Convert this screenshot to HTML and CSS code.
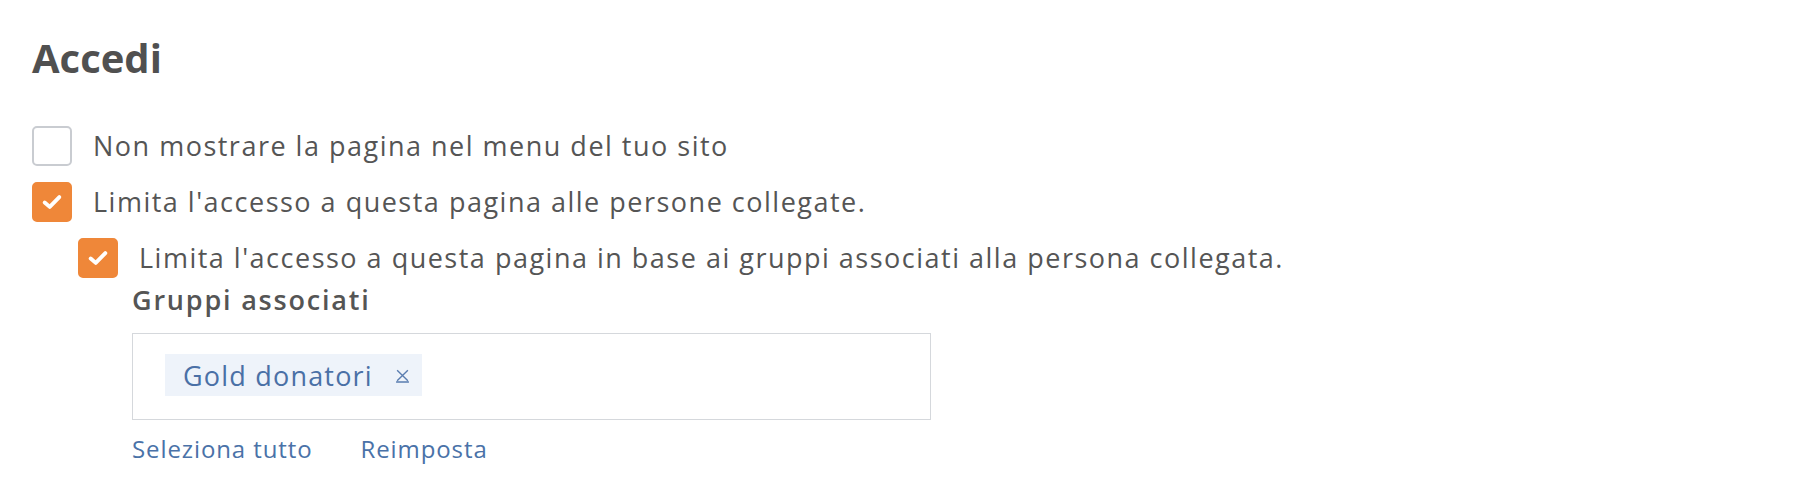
FILE: index.html
```html
<!DOCTYPE html>
<html lang="it">
<head>
    <meta charset="UTF-8">
    <title>Accedi</title>
    <link rel="stylesheet" href="styles.css">
</head>
<body>
    <div class="access-panel">
        <h1>Accedi</h1>
        <div class="option-list">
            <label class="option">
                <span class="check"></span>
                <span class="option-text">Non mostrare la pagina nel menu del tuo sito</span>
            </label>
            <label class="option">
                <span class="check checked">
                    <svg viewBox="0 0 16 16"><path d="M3.5 8.3 L6.6 11 L12.5 5"/></svg>
                </span>
                <span class="option-text">Limita l'accesso a questa pagina alle persone collegate.</span>
            </label>
            <div class="sub-options">
                <label class="option">
                    <span class="check checked">
                        <svg viewBox="0 0 16 16"><path d="M3.5 8.3 L6.6 11 L12.5 5"/></svg>
                    </span>
                    <span class="option-text sub-text">Limita l'accesso a questa pagina in base ai gruppi associati alla persona collegata.</span>
                </label>
                <div class="groups">
                    <div class="groups-label">Gruppi associati</div>
                    <div class="tag-box">
                        <span class="tag">Gold donatori
                            <svg class="tag-remove" viewBox="0 0 14 14"><path d="M2 2 L12 12 M12 2 L2 12 M1 13 H13"/></svg>
                        </span>
                    </div>
                    <div class="tag-actions">
                        <a href="#">Seleziona tutto</a>
                        <a href="#">Reimposta</a>
                    </div>
                </div>
            </div>
        </div>
    </div>
</body>
</html>
```

FILE: styles.css
```css
body {
    margin: 0;
    font-family: 'Open Sans', 'Noto Sans', sans-serif;
    background-color: #ffffff;
    color: #555555;
}
.access-panel {
    padding: 32px 32px;
}
.access-panel h1 {
    margin: 0 0 42px 0;
    font-size: 40px;
    font-weight: 700;
    color: #505050;
    line-height: 52px;
}
.option {
    display: flex;
    align-items: center;
    gap: 21px;
    margin-bottom: 16px;
    cursor: pointer;
}
.check {
    width: 36px;
    height: 36px;
    border: 2px solid #c9ccd1;
    border-radius: 5px;
    background-color: #ffffff;
    display: flex;
    align-items: center;
    justify-content: center;
    flex-shrink: 0;
}
.check.checked {
    background-color: #ef8739;
    border-color: #ef8739;
}
.check svg {
    width: 26px;
    height: 26px;
    fill: none;
    stroke: #ffffff;
    stroke-width: 2.4;
    stroke-linecap: round;
    stroke-linejoin: round;
}
.option-text {
    font-size: 27px;
    line-height: 40px;
    letter-spacing: 1.5px;
}
.sub-options {
    padding-left: 46px;
}
.sub-options .option {
    margin-bottom: 4px;
}
.groups {
    padding-left: 54px;
}
.groups-label {
    font-size: 27px;
    font-weight: 600;
    color: #555555;
    line-height: 36px;
    letter-spacing: 1.8px;
}
.tag-box {
    margin-top: 15px;
    width: 799px;
    height: 87px;
    border: 1px solid #d5d8dc;
    padding: 20px 32px;
    box-sizing: border-box;
}
.tag {
    display: inline-flex;
    align-items: center;
    height: 42px;
    padding: 0 12px 0 18px;
    background-color: #eef3fa;
    color: #4a70a6;
    font-size: 27px;
    letter-spacing: 1.2px;
}
.tag-remove {
    margin-left: 22px;
    width: 15px;
    height: 15px;
    fill: none;
    stroke: #5a7db0;
    stroke-width: 1.3;
}
.tag-actions {
    margin-top: 12px;
    display: flex;
    gap: 48px;
}
.tag-actions a {
    color: #4a72a8;
    text-decoration: none;
    font-size: 24px;
    letter-spacing: 0.9px;
}
```
